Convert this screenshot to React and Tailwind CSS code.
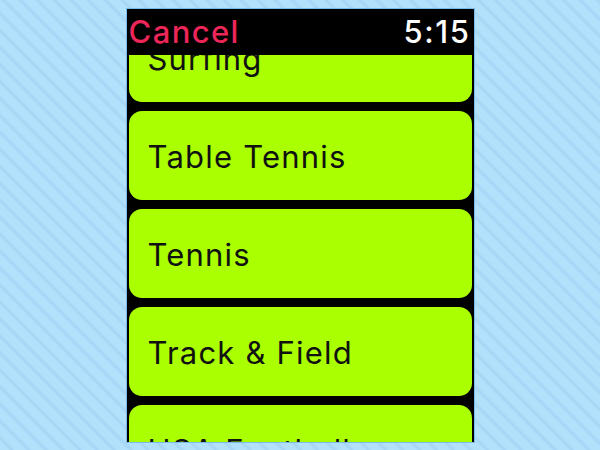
const sports = ['Surfing', 'Table Tennis', 'Tennis', 'Track & Field', 'USA Football']

export default function App() {
  return (
    // Striped backdrop with the watch screen centered
    <div className="w-[600px] h-[450px] flex items-start justify-center pt-[8px] bg-[repeating-linear-gradient(45deg,#b2e1fc_0px,#b2e1fc_6px,#a4d5f4_8.5px,#b2e1fc_11.5px,#b2e1fc_12px)] font-['Inter','Noto_Sans',sans-serif]">
      <div className="relative w-[349px] h-[435px] border border-[#7bbbe8] bg-black overflow-hidden">
        {/* Header sits over the scrolled list */}
        <div className="absolute top-0 left-0 right-0 h-[46px] bg-black flex items-start justify-between pl-[2px] pr-[3px] pt-[5px] z-10">
          <span className="text-[31px] leading-[36px] font-medium tracking-[1.4px] text-[#ec2659]">Cancel</span>
          <span className="text-[31px] leading-[36px] font-medium tracking-[1.6px] text-white">5:15</span>
        </div>

        {/* Workout list, scrolled so the first row is partly hidden */}
        <div className="flex flex-col gap-[9px] pt-[4px] pl-[2px] pr-[2px]">
          {sports.map((name) => (
            <div
              key={name}
              className="h-[89px] shrink-0 rounded-[13px] bg-[#aaff00] flex items-center pl-[19px]"
            >
              <span className="text-[31px] leading-[36px] pt-[2px] text-[#111] tracking-[1.2px] whitespace-nowrap">{name}</span>
            </div>
          ))}
        </div>
      </div>
    </div>
  )
}
